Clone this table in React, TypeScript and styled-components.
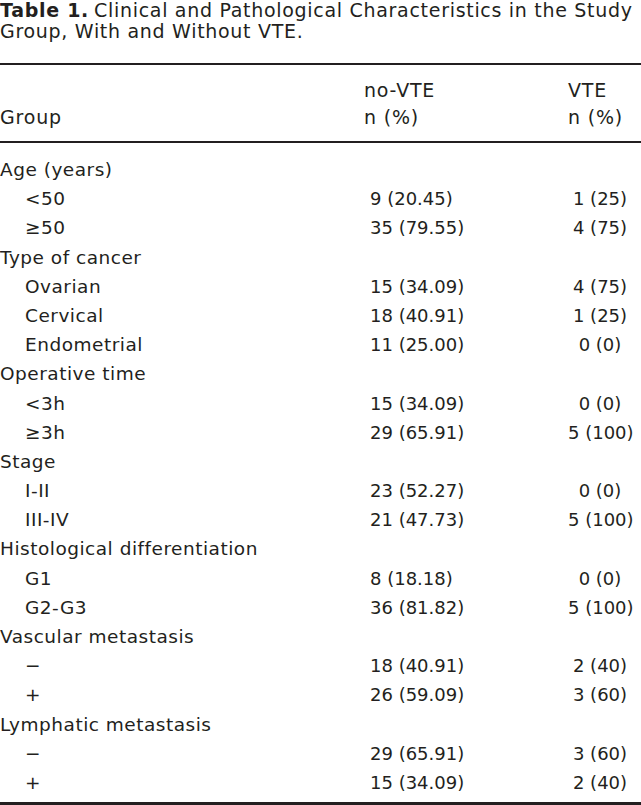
import React from "react";
import styled, { createGlobalStyle } from "styled-components";

const GlobalStyle = createGlobalStyle`
  html, body {
    margin: 0;
    padding: 0;
    background: #ffffff;
  }
  body {
    font-family: "DejaVu Sans", Lato, "Open Sans", sans-serif;
    color: #231f20;
  }
`;

const Page = styled.div`
  width: 641px;
  height: 805px;
  overflow: hidden;
  display: flex;
  flex-direction: column;
`;

const Caption = styled.div`
  font-size: 19px;
  line-height: 21px;
  white-space: nowrap;
  letter-spacing: 0.7px;
`;

const CaptionLabel = styled.strong`
  font-weight: 700;
  margin-right: 5px;
`;

const Head = styled.div`
  margin-top: 21px;
  border-top: 2px solid #231f20;
  border-bottom: 2px solid #231f20;
  padding: 12px 0 10px;
  display: grid;
  grid-template-columns: 364px 204px 1fr;
  font-size: 19px;
  line-height: 27px;
  letter-spacing: 0.8px;
`;

const HeadCell = styled.div`
  align-self: end;
`;

const Body = styled.div`
  flex: 1;
  padding-top: 12px;
  border-bottom: 3px solid #231f20;
  font-size: 18px;
`;

const Row = styled.div`
  display: grid;
  grid-template-columns: 364px 204px 64px;
  height: 29.2px;
  line-height: 29.2px;
  white-space: nowrap;
`;

const Label = styled.div<{ $sub?: boolean }>`
  padding-left: ${(p) => (p.$sub ? "25px" : "0")};
  font-size: 18.5px;
  letter-spacing: 0.5px;
`;

const NoVte = styled.div`
  padding-left: 6px;
`;

const Vte = styled.div`
  text-align: center;
`;

type Item = { label: string; noVte: string; vte: string };
type Group = { title: string; items: Item[] };

const groups: Group[] = [
  {
    title: "Age (years)",
    items: [
      { label: "<50", noVte: "9 (20.45)", vte: "1 (25)" },
      { label: "≥50", noVte: "35 (79.55)", vte: "4 (75)" },
    ],
  },
  {
    title: "Type of cancer",
    items: [
      { label: "Ovarian", noVte: "15 (34.09)", vte: "4 (75)" },
      { label: "Cervical", noVte: "18 (40.91)", vte: "1 (25)" },
      { label: "Endometrial", noVte: "11 (25.00)", vte: "0 (0)" },
    ],
  },
  {
    title: "Operative time",
    items: [
      { label: "<3h", noVte: "15 (34.09)", vte: "0 (0)" },
      { label: "≥3h", noVte: "29 (65.91)", vte: "5 (100)" },
    ],
  },
  {
    title: "Stage",
    items: [
      { label: "I-II", noVte: "23 (52.27)", vte: "0 (0)" },
      { label: "III-IV", noVte: "21 (47.73)", vte: "5 (100)" },
    ],
  },
  {
    title: "Histological differentiation",
    items: [
      { label: "G1", noVte: "8 (18.18)", vte: "0 (0)" },
      { label: "G2-G3", noVte: "36 (81.82)", vte: "5 (100)" },
    ],
  },
  {
    title: "Vascular metastasis",
    items: [
      { label: "−", noVte: "18 (40.91)", vte: "2 (40)" },
      { label: "+", noVte: "26 (59.09)", vte: "3 (60)" },
    ],
  },
  {
    title: "Lymphatic metastasis",
    items: [
      { label: "−", noVte: "29 (65.91)", vte: "3 (60)" },
      { label: "+", noVte: "15 (34.09)", vte: "2 (40)" },
    ],
  },
];

export default function App() {
  return (
    <>
      <GlobalStyle />
      <Page>
        <Caption>
          <CaptionLabel>Table 1.</CaptionLabel>
          Clinical and Pathological Characteristics in the Study
          <br />
          Group, With and Without VTE.
        </Caption>
        <Head>
          <HeadCell>Group</HeadCell>
          <HeadCell>
            no-VTE
            <br />n (%)
          </HeadCell>
          <HeadCell>
            VTE
            <br />n (%)
          </HeadCell>
        </Head>
        <Body>
          {groups.map((g) => (
            <React.Fragment key={g.title}>
              <Row>
                <Label>{g.title}</Label>
              </Row>
              {g.items.map((it, i) => (
                <Row key={g.title + i}>
                  <Label $sub>{it.label}</Label>
                  <NoVte>{it.noVte}</NoVte>
                  <Vte>{it.vte}</Vte>
                </Row>
              ))}
            </React.Fragment>
          ))}
        </Body>
      </Page>
    </>
  );
}
